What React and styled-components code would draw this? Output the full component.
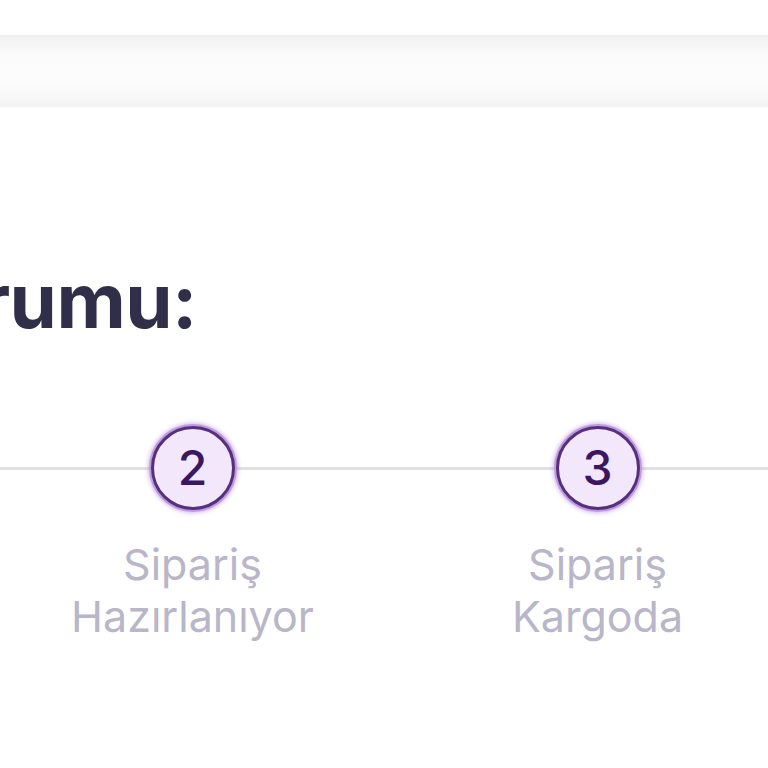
import React from "react";
import styled, { createGlobalStyle } from "styled-components";

const Global = createGlobalStyle`
  html, body { margin: 0; padding: 0; background: #ffffff; overflow: hidden; }
  body { font-family: Inter, "Noto Sans", sans-serif; }
`;

const Page = styled.div`
  width: 768px;
  height: 768px;
  overflow: hidden;
  padding-top: 35px;
  box-sizing: border-box;
`;

const TopBar = styled.div`
  height: 72px;
  background: linear-gradient(
    to bottom,
    #eeeeee 0px,
    #f3f3f3 4px,
    #fafafa 18px,
    #fcfcfc 36px,
    #fafafa 56px,
    #f5f5f5 66px,
    #f3f3f3 72px
  );
`;

const HeadingBox = styled.div`
  width: 197px;
  display: flex;
  justify-content: flex-end;
  margin-top: 155px;
`;

const Heading = styled.h2`
  margin: 0;
  white-space: nowrap;
  font-family: Inter, "Noto Sans", sans-serif;
  font-weight: 700;
  font-size: 76px;
  line-height: 76px;
  color: #302e48;
  letter-spacing: -0.5px;
`;

const Track = styled.div`
  position: relative;
  display: grid;
  grid-template-columns: repeat(4, 405px);
  margin-left: -415px;
  margin-top: 88px;
  &::before {
    content: "";
    position: absolute;
    left: 0;
    right: 0;
    top: 41px;
    height: 3px;
    background: #e1e0e4;
  }
`;

const Step = styled.div`
  position: relative;
  display: flex;
  flex-direction: column;
  align-items: center;
`;

const Circle = styled.div`
  width: 78px;
  height: 78px;
  border-radius: 50%;
  border: 3px solid #56307d;
  box-shadow: 0 0 0 2px #bf9be0, 0 0 4px 3px rgba(175, 130, 220, 0.55);
  background: ${(p) => (p.$active ? "#56307d" : "#f3e7fc")};
  display: flex;
  align-items: center;
  justify-content: center;
  font-family: Inter, "Noto Sans", sans-serif;
  font-weight: 500;
  font-size: 48px;
  color: #3b1762;
  line-height: 1;
`;

const Label = styled.div`
  margin-top: 28px;
  text-align: center;
  font-family: Inter, "Noto Sans", sans-serif;
  font-weight: 400;
  font-size: 43px;
  line-height: 52px;
  color: #b8b6c8;
  white-space: nowrap;
`;

const steps = [
  { n: 1, l1: "Sipariş", l2: "Alındı" },
  { n: 2, l1: "Sipariş", l2: "Hazırlanıyor" },
  { n: 3, l1: "Sipariş", l2: "Kargoda" },
  { n: 4, l1: "Teslim", l2: "Edildi" },
];

export default function App() {
  return (
    <Page>
      <Global />
      <TopBar />
      <HeadingBox>
        <Heading>Sipariş Durumu:</Heading>
      </HeadingBox>
      <Track>
        {steps.map((s) => (
          <Step key={s.n}>
            <Circle>{s.n}</Circle>
            <Label>
              {s.l1}
              <br />
              {s.l2}
            </Label>
          </Step>
        ))}
      </Track>
    </Page>
  );
}
